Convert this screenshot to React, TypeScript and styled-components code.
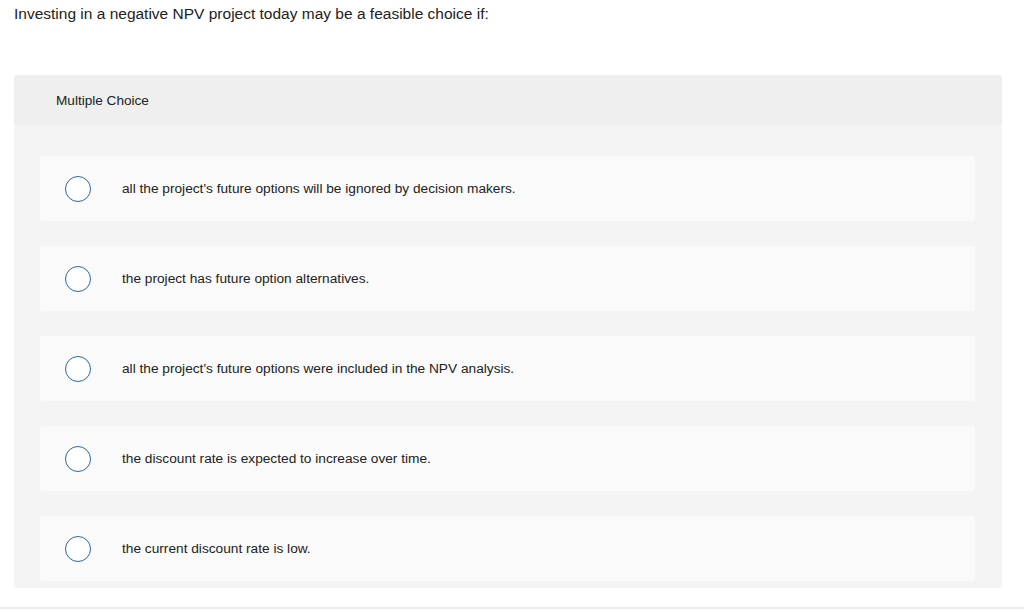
import React from "react";
import styled, { createGlobalStyle } from "styled-components";

const GlobalStyle = createGlobalStyle`
  body {
    margin: 0;
    background: #ffffff;
    font-family: "Liberation Sans", Arial, sans-serif;
    color: #222;
  }
`;

const Page = styled.div`
  width: 1024px;
  height: 616px;
  overflow: hidden;
  padding: 0 22px 0 14px;
  box-sizing: border-box;
`;

const Question = styled.p`
  margin: 0;
  padding-top: 5px;
  height: 70px;
  font-size: 15.5px;
  line-height: 18px;
  color: #222;
`;

const Panel = styled.div`
  width: 988px;
  background: #f4f4f4;
  border-radius: 3px 3px 0 0;
`;

const PanelHeader = styled.div`
  height: 50px;
  display: flex;
  align-items: center;
  padding-left: 42px;
  background: #efefef;
  border-radius: 3px 3px 0 0;
  font-size: 13.6px;
  color: #222;
`;

const Options = styled.ul`
  list-style: none;
  margin: 0;
  padding: 31px 27px 7px 26px;
  display: flex;
  flex-direction: column;
  gap: 25px;
`;

const Option = styled.li`
  height: 65px;
  display: flex;
  align-items: center;
  background: #fafafa;
  border-radius: 3px;
  padding-left: 25px;
  font-size: 13.7px;
  color: #222;
  cursor: pointer;
`;

const Radio = styled.span`
  width: 26px;
  height: 26px;
  box-sizing: border-box;
  border: 1.5px solid #2b679e;
  border-radius: 50%;
  background: #fff;
  flex-shrink: 0;
  margin-right: 31px;
  margin-top: 1px;
`;

const Divider = styled.div`
  margin: 19px -22px 0 -14px;
  height: 2px;
  background: #ececec;
`;

const choices = [
  "all the project's future options will be ignored by decision makers.",
  "the project has future option alternatives.",
  "all the project's future options were included in the NPV analysis.",
  "the discount rate is expected to increase over time.",
  "the current discount rate is low.",
];

export default function App() {
  return (
    <>
      <GlobalStyle />
      <Page>
        <Question>
          Investing in a negative NPV project today may be a feasible choice if:
        </Question>
        <Panel>
          <PanelHeader>Multiple Choice</PanelHeader>
          <Options>
            {choices.map((c) => (
              <Option key={c}>
                <Radio />
                {c}
              </Option>
            ))}
          </Options>
        </Panel>
        <Divider />
      </Page>
    </>
  );
}
